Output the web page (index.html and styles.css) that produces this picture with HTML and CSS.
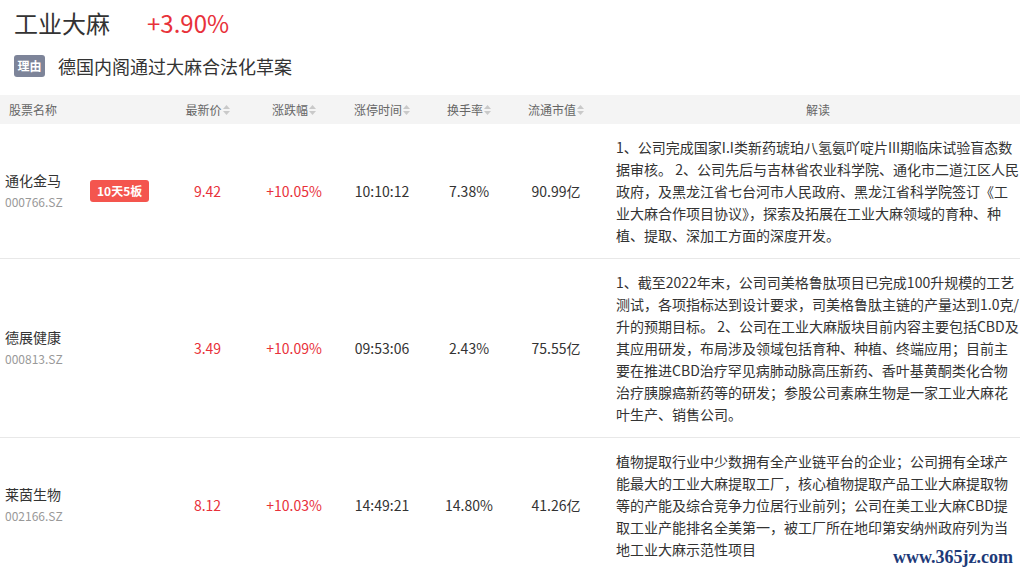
FILE: index.html
```html
<!DOCTYPE html>
<html lang="zh-CN">
<head>
<meta charset="utf-8">
<title>工业大麻</title>
<link rel="stylesheet" href="styles.css">
</head>
<body>
<div class="page">
  <div class="title-row">
    <span class="title">工业大麻</span>
    <span class="pct up">+3.90%</span>
  </div>
  <div class="reason-row">
    <span class="tag">理由</span>
    <span class="reason">德国内阁通过大麻合法化草案</span>
  </div>
  <table class="stocks">
    <colgroup>
      <col class="c-name"><col class="c-badge"><col class="c-price"><col class="c-chg"><col class="c-time"><col class="c-turn"><col class="c-cap"><col class="c-desc">
    </colgroup>
    <thead>
      <tr>
        <th colspan="2" class="th-name">股票名称</th>
        <th><span class="sortable">最新价<svg class="sort" viewBox="0 0 7 12" width="7" height="12"><path d="M0 5L3.5 1L7 5Z M0 7L3.5 11L7 7Z"/></svg></span></th>
        <th><span class="sortable">涨跌幅<svg class="sort" viewBox="0 0 7 12" width="7" height="12"><path d="M0 5L3.5 1L7 5Z M0 7L3.5 11L7 7Z"/></svg></span></th>
        <th><span class="sortable">涨停时间<svg class="sort" viewBox="0 0 7 12" width="7" height="12"><path d="M0 5L3.5 1L7 5Z M0 7L3.5 11L7 7Z"/></svg></span></th>
        <th><span class="sortable">换手率<svg class="sort" viewBox="0 0 7 12" width="7" height="12"><path d="M0 5L3.5 1L7 5Z M0 7L3.5 11L7 7Z"/></svg></span></th>
        <th><span class="sortable">流通市值<svg class="sort" viewBox="0 0 7 12" width="7" height="12"><path d="M0 5L3.5 1L7 5Z M0 7L3.5 11L7 7Z"/></svg></span></th>
        <th class="th-desc">解读</th>
      </tr>
    </thead>
    <tbody>
      <tr>
        <td class="name"><div class="sname">通化金马</div><div class="code">000766.SZ</div></td>
        <td class="badge-cell"><span class="board">10天5板</span></td>
        <td class="num up">9.42</td>
        <td class="num up">+10.05%</td>
        <td class="num">10:10:12</td>
        <td class="num">7.38%</td>
        <td class="num">90.99亿</td>
        <td class="desc">1、公司完成国家I.I类新药琥珀八氢氨吖啶片III期临床试验盲态数据审核。 2、公司先后与吉林省农业科学院、通化市二道江区人民政府，及黑龙江省七台河市人民政府、黑龙江省科学院签订《工业大麻合作项目协议》，探索及拓展在工业大麻领域的育种、种植、提取、深加工方面的深度开发。</td>
      </tr>
      <tr>
        <td class="name"><div class="sname">德展健康</div><div class="code">000813.SZ</div></td>
        <td class="badge-cell"></td>
        <td class="num up">3.49</td>
        <td class="num up">+10.09%</td>
        <td class="num">09:53:06</td>
        <td class="num">2.43%</td>
        <td class="num">75.55亿</td>
        <td class="desc">1、截至2022年末，公司司美格鲁肽项目已完成100升规模的工艺测试，各项指标达到设计要求，司美格鲁肽主链的产量达到1.0克/升的预期目标。 2、公司在工业大麻版块目前内容主要包括CBD及其应用研发，布局涉及领域包括育种、种植、终端应用；目前主要在推进CBD治疗罕见病肺动脉高压新药、香叶基黄酮类化合物治疗胰腺癌新药等的研发；参股公司素麻生物是一家工业大麻花叶生产、销售公司。</td>
      </tr>
      <tr>
        <td class="name"><div class="sname">莱茵生物</div><div class="code">002166.SZ</div></td>
        <td class="badge-cell"></td>
        <td class="num up">8.12</td>
        <td class="num up">+10.03%</td>
        <td class="num">14:49:21</td>
        <td class="num">14.80%</td>
        <td class="num">41.26亿</td>
        <td class="desc">植物提取行业中少数拥有全产业链平台的企业；公司拥有全球产能最大的工业大麻提取工厂，核心植物提取产品工业大麻提取物等的产能及综合竞争力位居行业前列；公司在美工业大麻CBD提取工业产能排名全美第一，被工厂所在地印第安纳州政府列为当地工业大麻示范性项目</td>
      </tr>
    </tbody>
  </table>
  <div class="watermark">www.365jz.com</div>
</div>
</body>
</html>
```

FILE: styles.css
```css
html, body {
  margin: 0;
  padding: 0;
  background: #fff;
}
body {
  font-family: "Noto Sans CJK SC", "Noto Sans", sans-serif;
  color: #333;
  width: 1020px;
  height: 572px;
  overflow: hidden;
}
.page {
  position: relative;
  width: 1020px;
  height: 572px;
}
.title-row {
  display: flex;
  align-items: center;
  padding: 7px 14px 0;
  height: 32px;
  font-size: 24px;
  line-height: 32px;
}
.title {
  color: #333;
}
.pct {
  margin-left: 37px;
}
.up {
  color: #e8313a;
}
.reason-row {
  display: flex;
  align-items: center;
  margin-top: 16px;
  padding-left: 14px;
  height: 22px;
}
.tag {
  display: inline-block;
  width: 31px;
  height: 22px;
  line-height: 22px;
  text-align: center;
  background: #7d8499;
  color: #fff;
  font-size: 12px;
  font-weight: bold;
  border-radius: 3px;
}
.reason {
  margin-left: 13px;
  font-size: 18px;
  line-height: 24px;
  color: #333;
}
.stocks {
  margin-top: 18px;
  width: 1020px;
  border-collapse: collapse;
  table-layout: fixed;
}
.c-name { width: 85px; }
.c-badge { width: 80px; }
.c-price { width: 85px; }
.c-chg { width: 88px; }
.c-time { width: 88px; }
.c-turn { width: 86px; }
.c-cap { width: 88px; }
.c-desc { width: 420px; }
.stocks th {
  background: #f4f4f4;
  color: #666;
  font-size: 12px;
  font-weight: normal;
  height: 29px;
  padding: 0;
  text-align: center;
  line-height: 29px;
}
.stocks th.th-name {
  text-align: left;
  padding-left: 9px;
}
.stocks th.th-desc {
  padding-left: 16px;
}
.sortable {
  display: inline-flex;
  align-items: center;
}
.sort {
  fill: #c9c9c9;
  margin-left: 1px;
}
.stocks td {
  border-bottom: 1px solid #e8e8e8;
  padding: 0;
  vertical-align: middle;
  font-size: 14px;
}
.stocks tbody tr:last-child td {
  border-bottom: none;
}
.name {
  padding-left: 5px !important;
}
.sname {
  font-size: 14px;
  line-height: 22px;
  color: #333;
  white-space: nowrap;
}
.code {
  font-size: 12px;
  line-height: 22px;
  color: #999;
}
.badge-cell {
  padding-left: 5px !important;
}
.board {
  display: inline-block;
  height: 22px;
  line-height: 22px;
  padding: 0 7px;
  background: #f4554e;
  color: #fff;
  font-size: 12px;
  font-weight: bold;
  border-radius: 3px;
}
.num {
  text-align: center;
  color: #333;
}
.num.up {
  color: #e8313a;
}
.desc {
  padding: 12px 0 12px 16px !important;
  line-height: 22px;
  color: #333;
  text-align: left;
}
.watermark {
  position: absolute;
  right: 7px;
  bottom: 5px;
  font-family: "Liberation Serif", serif;
  font-size: 18px;
  font-weight: bold;
  color: #1d3a78;
  background: #fff;
  line-height: 20px;
  padding-left: 2px;
}
```
